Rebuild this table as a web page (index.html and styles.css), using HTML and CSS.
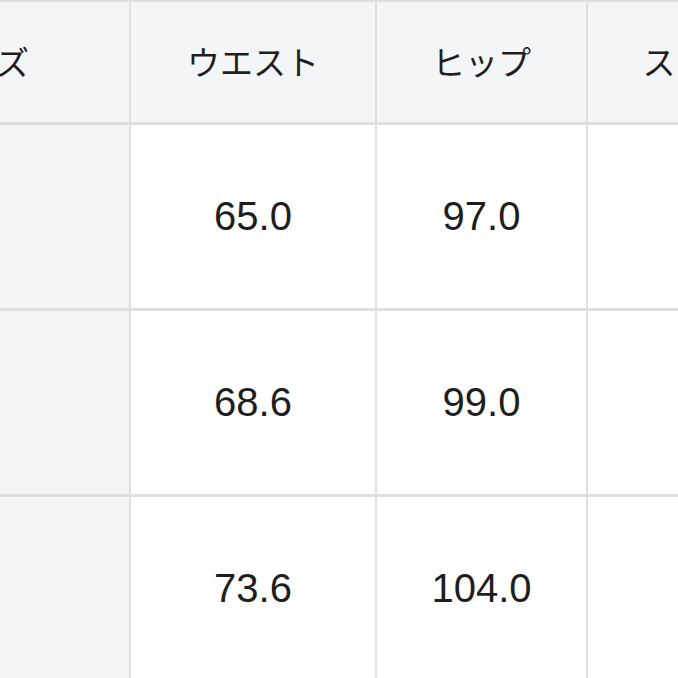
FILE: index.html
```html
<!DOCTYPE html>
<html lang="ja">
<head>
<meta charset="utf-8">
<title>サイズ表</title>
<link rel="stylesheet" href="styles.css">
</head>
<body>
<div class="size-table">
  <div class="cell head">サイズ</div>
  <div class="cell head">ウエスト</div>
  <div class="cell head">ヒップ</div>
  <div class="cell head">スカート丈</div>

  <div class="cell label">S</div>
  <div class="cell num">65.0</div>
  <div class="cell num">97.0</div>
  <div class="cell num">75.0</div>

  <div class="cell label">M</div>
  <div class="cell num">68.6</div>
  <div class="cell num">99.0</div>
  <div class="cell num">76.0</div>

  <div class="cell label">L</div>
  <div class="cell num">73.6</div>
  <div class="cell num">104.0</div>
  <div class="cell num">77.0</div>
</div>
</body>
</html>
```
FILE: styles.css
```css
html, body {
  margin: 0;
  padding: 0;
  background: #ffffff;
  overflow: hidden;
}

.size-table {
  display: grid;
  grid-template-columns: 298px 244px 209px 274px;
  grid-template-rows: 120px 183px 183px 183px;
  column-gap: 2px;
  row-gap: 3px;
  padding-top: 2px;
  margin-left: -169px;
  width: max-content;
  background: #dedfe1;
  color: #1e1e1e;
}

.cell {
  display: flex;
  align-items: center;
  justify-content: center;
  background: #ffffff;
}

.head {
  background: #f4f5f7;
  font-family: "Noto Sans CJK JP", "Noto Sans", sans-serif;
  font-size: 33px;
  font-weight: 400;
  padding-bottom: 2px;
}

.label {
  background: #f4f5f7;
  font-family: "Liberation Sans", Arial, sans-serif;
  font-size: 40px;
}

.num {
  font-family: "Liberation Sans", Arial, sans-serif;
  font-size: 40px;
}
```
